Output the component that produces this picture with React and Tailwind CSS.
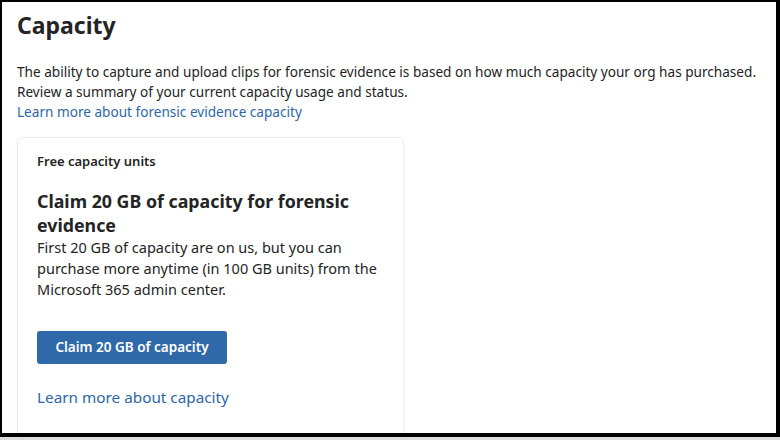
import React from 'react';

const font = { fontFamily: '"Noto Sans", "Open Sans", sans-serif' };

const CapacityCard = () => (
  <div className="w-[387px] shrink-0 rounded-md border border-[#ececec] bg-white pl-[19px] pr-4 pt-[13px] pb-8 shadow-[0_1px_3px_rgba(0,0,0,0.06)]">
    <div className="text-[13px] font-semibold leading-5 text-[#242424]">Free capacity units</div>

    <h2 className="mt-[18px] text-[17.8px] font-bold leading-6 text-[#242424]">
      Claim 20 GB of capacity for forensic evidence
    </h2>
    <p className="text-[14.5px] leading-[21px] text-[#242424]">
      First 20 GB of capacity are on us, but you can purchase more anytime (in 100 GB units) from the
      Microsoft 365 admin center.
    </p>

    <button className="mt-[31px] h-[33px] w-[190px] rounded-[3px] bg-[#2f69aa] text-[13.5px] font-semibold text-white">
      Claim 20 GB of capacity
    </button>

    <div className="mt-[21px]">
      <a href="#" className="text-[15.3px] leading-6 text-[#2d67a6]">Learn more about capacity</a>
    </div>
  </div>
);

export default function App() {
  return (
    <div className="h-[440px] w-[780px] bg-[#dcdcdc]" style={font}>
      <div className="h-[437px] w-[780px] overflow-hidden border-t-2 border-l-2 border-r-4 border-b-4 border-black bg-white pl-[15px] pt-[7px]">
        <h1 className="text-[23px] font-bold leading-8 text-[#242424]">Capacity</h1>

        <div className="mt-[21px] text-[13.6px] leading-[20px] text-[#242424]">
          <p>The ability to capture and upload clips for forensic evidence is based on how much capacity your org has purchased.</p>
          <p>Review a summary of your current capacity usage and status.</p>
          <a href="#" className="text-[#2d67a6]">Learn more about forensic evidence capacity</a>
        </div>

        <div className="mt-[15px] flex">
          <CapacityCard />
        </div>
      </div>
    </div>
  );
}
